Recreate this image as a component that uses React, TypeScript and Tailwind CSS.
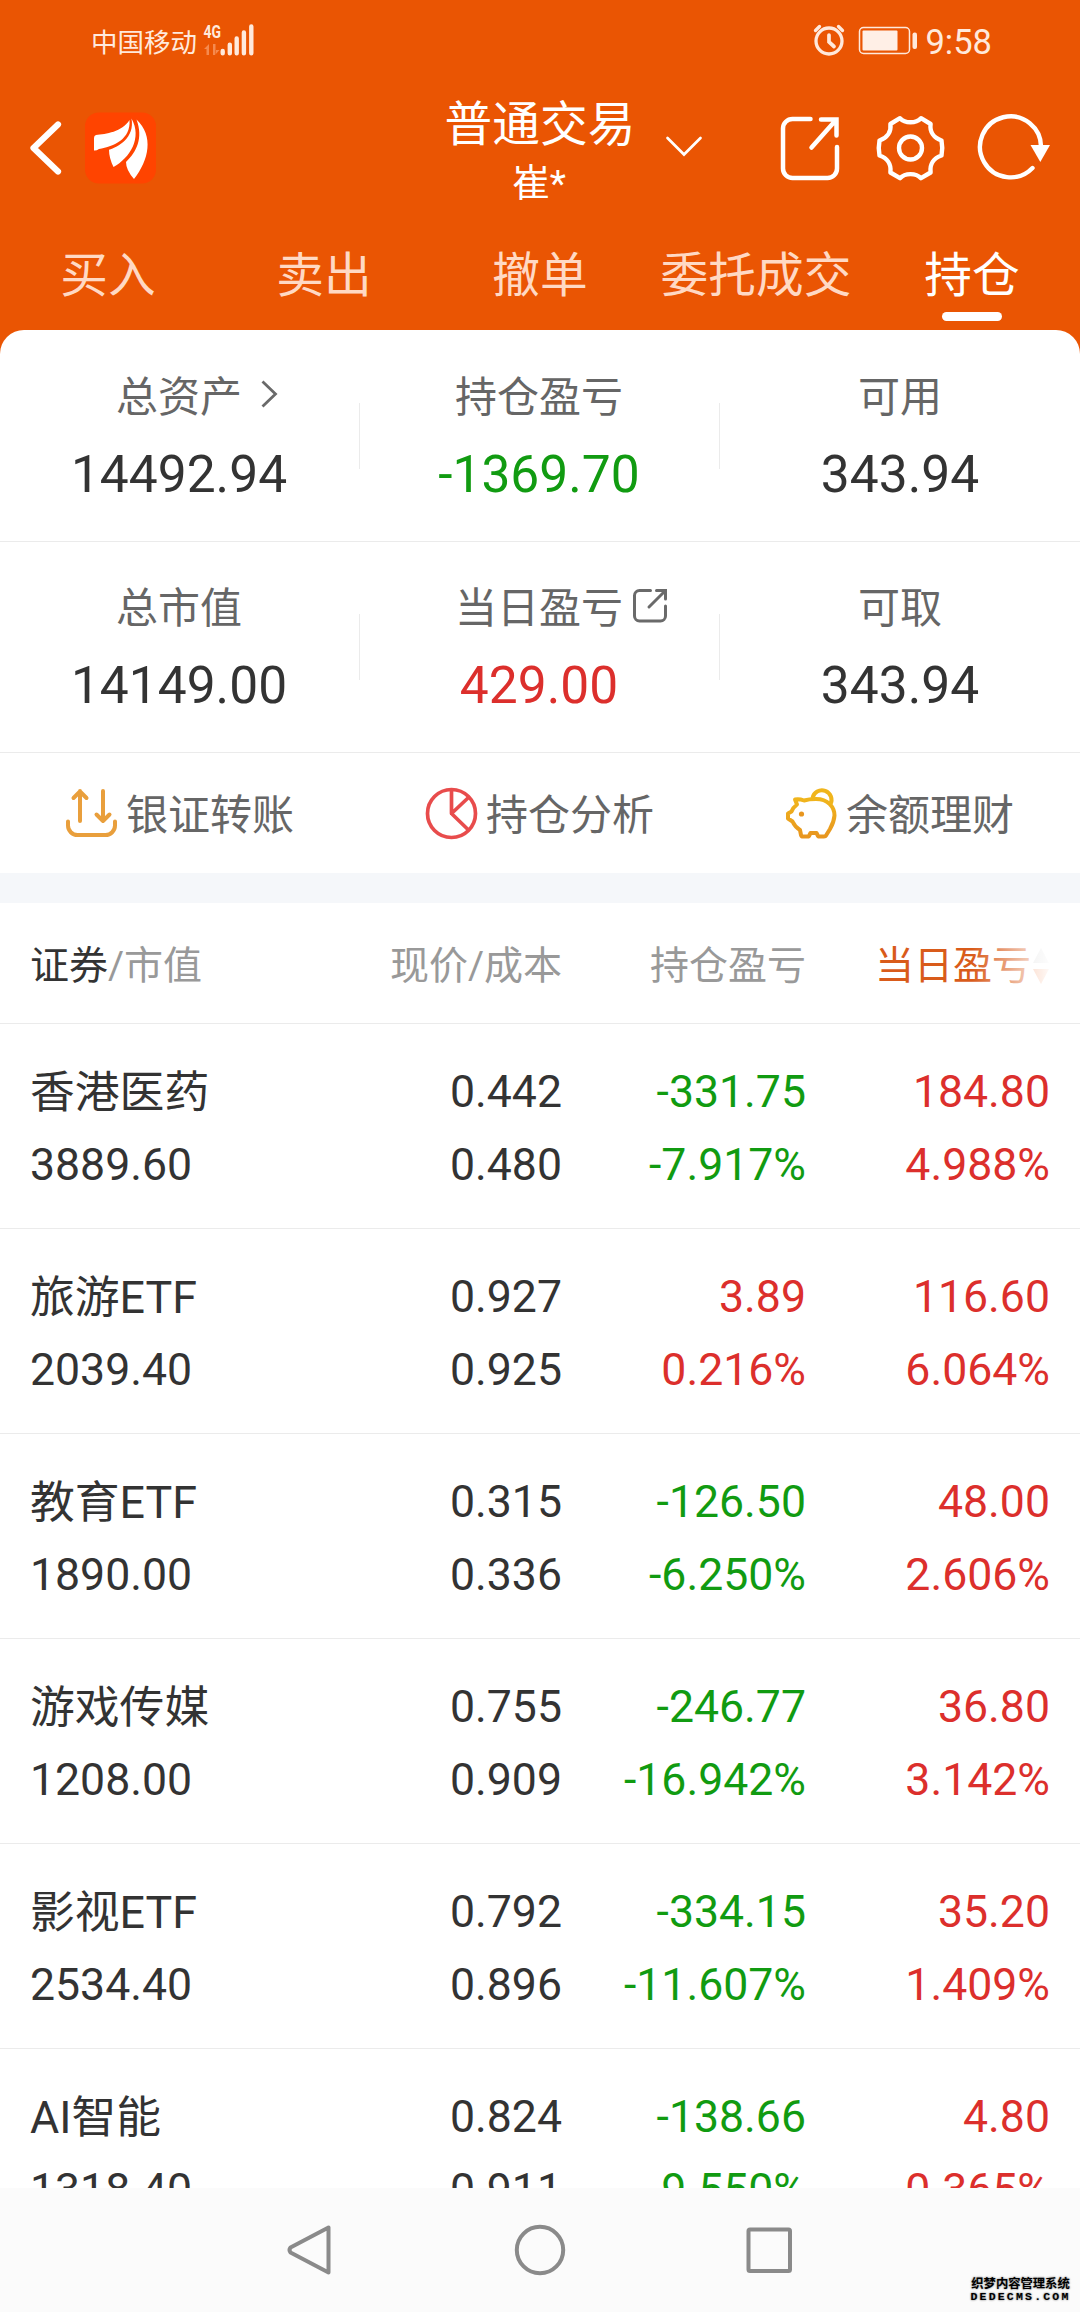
import React from "react";

const GREEN = "text-[#119b11]";
const RED = "text-[#dc2f2c]";

function StatusBar() {
  return (
    <div className="flex h-[84px] items-start justify-between pr-[88px] pl-[91px] text-[#ffe9dc]">
      <div className="flex pt-[22px]">
        <span className="mt-[2px] text-[26.5px] leading-[38px] whitespace-nowrap">中国移动</span>
        <svg className="ml-[6px] h-[36px] w-[54px] overflow-visible" viewBox="203 22 54 36">
          <text x="203.5" y="38" fontSize="19" fontWeight="700" textLength="17.5" lengthAdjust="spacingAndGlyphs" fill="#ffe9dc" fontFamily="Roboto">4G</text>
          <path d="M204 49l5-5v11h-2.500v-6zM213 44h2.500v11h-2.500zM215 55l4.500-5h-4.500z" fill="#f58a4f" />
          <path d="M222.700 51v2.300M229.800 44.800v8.500M236.700 38.500v14.800M243.900 32.500v20.800M251.300 26.500v26.800" stroke="#ffe9dc" strokeWidth="4.400" strokeLinecap="round" />
        </svg>
      </div>
      <div className="flex pt-[22px]">
        <svg className="h-[36px] w-[108px]" viewBox="812 22 108 36" fill="none" stroke="#ffe9dc">
          <circle cx="829" cy="41" r="13" strokeWidth="3.300" />
          <path d="M829 35v7l5 4.500" strokeWidth="3.700" strokeLinecap="round" />
          <path d="M815.500 30.500l4-4M842.500 30.500l-4-4" strokeWidth="3.300" strokeLinecap="round" />
          <rect x="859.500" y="27.500" width="50" height="26" rx="4" strokeWidth="1.500" />
          <rect x="862.500" y="30.500" width="35" height="20" rx="1" fill="#ffefe6" stroke="none" />
          <rect x="912.500" y="32.500" width="4.500" height="16.500" rx="2" fill="#ffe9dc" stroke="none" />
        </svg>
        <span className="mt-px ml-[5px] text-[34.5px] leading-[38px]">9:58</span>
      </div>
    </div>
  );
}

function TitleBar() {
  return (
    <div className="grid h-[132px] grid-cols-[360px_360px_360px] text-white">
      <div className="flex items-start pt-[28px] pl-[28px]">
        <svg className="h-[72px] w-[36px]" viewBox="28 112 36 72" fill="none">
          <path d="M58 124.500L33.500 148l24.500 23.500" stroke="#fff" strokeWidth="6.200" strokeLinecap="round" strokeLinejoin="round" />
        </svg>
        <svg className="ml-[21px] h-[72px] w-[72px]" viewBox="85 112 72 72">
          <rect x="85" y="112.500" width="71" height="71" rx="14" fill="#ff4400" />
          <path d="M129.500 120C122 132 106 134 96 135Q94 135.500 94 138V150.500Q96 151 99 149C114 146.500 131 139 129.500 120z" fill="#fff" />
          <path d="M131.500 118.500C135 138 118 147 109 149.800Q109 158 113.500 167C130 158 142.500 138 131.500 118.500z" fill="#fff" />
          <path d="M136.500 119.500C143.500 138 136.500 152 126 162Q126 170 134 179C149 160 154 136 136.500 119.500z" fill="#fff" />
        </svg>
      </div>
      <div className="flex flex-col items-center">
        <div className="mt-[7px] text-[47.7px] leading-[68px] whitespace-nowrap">普通交易</div>
        <div className="relative -left-px -mt-[2px] text-[37.5px] leading-[52px]">崔*</div>
      </div>
      <div className="flex items-start pt-[28px]">
        <svg className="-ml-[56px] h-[72px] w-[390px] shrink-0" viewBox="664 112 390 72" fill="none" stroke="#fff" strokeLinecap="round">
          <path d="M667.500 138L684 154.500L700.500 138" strokeWidth="2.700" />
          <path d="M810.500 119h-18a9.500 9.500 0 0 0-9.500 9.500v40a9.500 9.500 0 0 0 9.500 9.500h35a9.500 9.500 0 0 0 9.500-9.500v-21.500M821 119.500h15.500v16M835.500 120.500l-24 27" strokeWidth="4.500" />
          <path d="M900 118.200C905 123.600 916 123.600 921 118.200L930.600 124C929.500 132 934 138 941.500 140.500Q943 148 941.500 155.500C934 158 929.500 164 930.600 172.500L921 178.200C916 172.800 905 172.800 900 178.200L890.400 172.500C891.500 164 887 158 879.500 155.500Q878 148 879.500 140.500C887 138 891.500 132 890.400 124z" strokeWidth="4.400" strokeLinejoin="round" />
          <circle cx="910.500" cy="148" r="11.500" strokeWidth="4.400" />
          <path d="M1041 148A30.500 30.500 0 1 0 1032.500 168" strokeWidth="4.400" />
          <path d="M1030.500 145h19.500l-9.700 17z" fill="#fff" stroke="none" />
        </svg>
      </div>
    </div>
  );
}

function Tabs() {
  const tabs = ["买入", "卖出", "撤单", "委托成交", "持仓"];
  return (
    <div className="grid h-[129px] grid-cols-5 text-[47.7px] leading-[68px] text-[#ffd9c4]">
      {tabs.map((t) => (
        <div key={t} className="flex flex-col items-center pt-[26px] whitespace-nowrap">
          {t === "持仓" ? (
            <>
              <span className="text-white">{t}</span>
              <span className="mt-[2px] h-[9px] w-[60px] rounded-full bg-white" />
            </>
          ) : (
            <span>{t}</span>
          )}
        </div>
      ))}
    </div>
  );
}

function Share() {
  return (
    <svg className="absolute top-[1px] left-full ml-[8px] h-[38px] w-[38px]" viewBox="631 586 38 38" fill="none" stroke="#6a6a6a" strokeWidth="3" strokeLinecap="round">
      <path d="M650.500 589.500H639.500a5 5 0 0 0-5 5v20.500a5 5 0 0 0 5 5H660.500a5 5 0 0 0 5-5v-10M656.500 589.500h9v8.500M665 590l-16 16" />
    </svg>
  );
}

type Cell = { label: string; value: string; color?: string; mark?: React.ReactNode };

function SummaryRow({ cells }: { cells: Cell[] }) {
  return (
    <div className="grid h-[211px] grid-cols-3 border-b border-[#ebebeb]">
      {cells.map((c, i) => (
        <div key={c.label} className={"relative flex flex-col items-center pt-[44px] " + (i < 2 ? "pr-[2px]" : "")}>
          <div className="relative text-[42px] leading-[46px] text-[#666666]">
            {c.label}
            {c.mark}
          </div>
          <div className={"mt-[24px] text-[51.5px] leading-[60px] " + (c.color ?? "text-[#333333]")}>{c.value}</div>
          {i < 2 && <span className="absolute top-[72px] right-0 h-[66px] w-px bg-[#ebebeb]" />}
        </div>
      ))}
    </div>
  );
}

const actions = [
  {
    label: "银证转账",
    icon: (
      <svg className="h-[54px] w-[54px]" viewBox="65 785 54 54" fill="none" stroke="#e99f3c" strokeWidth="4" strokeLinecap="round" strokeLinejoin="round">
        <path d="M68 820.500v4a9.500 9.500 0 0 0 9.500 9.500h28a9.500 9.500 0 0 0 9.500-9.500v-4M80 820v-30M73.500 797l6.500-6.500l6.500 6.500M103 790v30M96.500 813.500l6.500 6.500l6.500-6.500" />
      </svg>
    ),
  },
  {
    label: "持仓分析",
    icon: (
      <svg className="h-[54px] w-[54px]" viewBox="425 785 54 54" fill="none" stroke="#e84c4c" strokeWidth="3.700" strokeLinejoin="round">
        <circle cx="451.500" cy="812.500" r="24" />
        <path d="M451.500 788.500V812.500L468.500 796.500M451.500 812.500L468.500 829" />
      </svg>
    ),
  },
  {
    label: "余额理财",
    icon: (
      <svg className="h-[54px] w-[54px]" viewBox="785 785 54 54" fill="none" strokeWidth="4" strokeLinejoin="round">
        <defs>
          <linearGradient id="pig" x1="0" y1="0" x2="0" y2="1">
            <stop offset="0" stopColor="#f0b51c" />
            <stop offset="1" stopColor="#e8961f" />
          </linearGradient>
        </defs>
        <path d="M795 798.500Q799 797.500 804 799.500Q809 798 816 798C828 798 834.500 806 834.500 814.500Q834 821 830 828L826 834.500Q825.500 835.500 824 835.500H819.500Q818 835.500 817.500 834L816.500 832H810.500L809.500 834Q809 835.500 807.500 835.500H803Q801.500 835.500 801 834L800 829Q795 826 792.500 820.500L788 817.500V812.500L791.500 810.500Q793 806.500 797 803.500z" stroke="url(#pig)" />
        <path d="M812.500 797a9.600 9.600 0 1 1 17.800 6.500" stroke="#f0b51c" />
        <circle cx="801.500" cy="813" r="2.600" fill="#e8961f" />
      </svg>
    ),
  },
];

function Actions() {
  return (
    <div className="grid h-[120px] grid-cols-3">
      {actions.map((a) => (
        <div key={a.label} className="flex items-center justify-center gap-[7px] pr-px text-[42px] leading-[60px] whitespace-nowrap text-[#666666]">
          {a.icon}
          <span className="mt-[5px]">{a.label}</span>
        </div>
      ))}
    </div>
  );
}

function TableHeader() {
  return (
    <div className="grid h-[121px] grid-cols-[318px_214px_244px_244px] items-center border-b border-[#ebebeb] px-[30px] pt-[7px] text-[39px] whitespace-nowrap text-[#999999]">
      <div>
        <span className="text-[#333333]">证券</span>/市值
      </div>
      <div className="text-right">现价/成本</div>
      <div className="text-right">持仓盈亏</div>
      <div className="relative flex items-center justify-end text-[#d95b1a]">
        <span>当日盈亏</span>
        <svg className="-mt-px ml-px h-[36px] w-[18px]" viewBox="0 0 18 36">
          <path d="M9 0l8 15H1z" fill="#d8d8d8" />
          <path d="M9 36l8-15H1z" fill="#f49a6c" />
        </svg>
        <span className="absolute inset-y-0 right-0 w-[78px] bg-linear-to-r from-white/0 to-white/95" />
      </div>
    </div>
  );
}

const rows = [
  ["香港医药", "3889.60", "0.442", "0.480", "-331.75", "-7.917%", "184.80", "4.988%"],
  ["旅游ETF", "2039.40", "0.927", "0.925", "3.89", "0.216%", "116.60", "6.064%"],
  ["教育ETF", "1890.00", "0.315", "0.336", "-126.50", "-6.250%", "48.00", "2.606%"],
  ["游戏传媒", "1208.00", "0.755", "0.909", "-246.77", "-16.942%", "36.80", "3.142%"],
  ["影视ETF", "2534.40", "0.792", "0.896", "-334.15", "-11.607%", "35.20", "1.409%"],
  ["AI智能", "1318.40", "0.824", "0.911", "-138.66", "9.550%", "4.80", "0.365%"],
];

function Pair({ a, b, color }: { a: string; b: string; color: string }) {
  return (
    <div className={"flex flex-col text-[44.6px] " + color}>
      <span className="h-[73px] leading-[73px]">{a}</span>
      <span className="h-[73px] leading-[73px]">{b}</span>
    </div>
  );
}

function Holdings() {
  return (
    <div className="h-[1164px] overflow-hidden">
      {rows.map((r) => (
        <div key={r[0]} className="grid h-[205px] grid-cols-[318px_214px_244px_244px] border-b border-[#ebebeb] px-[30px] pt-[32px] text-right">
          <div className="flex flex-col text-left text-[#333333]">
            <span className="h-[73px] text-[44.8px] leading-[73px]">{r[0]}</span>
            <span className="h-[73px] text-[44.6px] leading-[73px]">{r[1]}</span>
          </div>
          <Pair a={r[2]} b={r[3]} color="text-[#333333]" />
          <Pair a={r[4]} b={r[5]} color={r[4].startsWith("-") ? GREEN : RED} />
          <Pair a={r[6]} b={r[7]} color={RED} />
        </div>
      ))}
    </div>
  );
}

function NavBar() {
  return (
    <div className="relative grid h-[124px] grid-cols-[310px_460px_310px] bg-[#fbfbfb]">
      <svg className="col-start-2 mt-[32px] ml-[-30px] h-[60px] w-[520px]" viewBox="280 2220 520 60" fill="none" stroke="#8a8a8a" strokeWidth="4" strokeLinejoin="round">
        <path d="M328.500 2227.500v45L290.500 2252.500Q288.500 2250 290.500 2247.500z" />
        <circle cx="540" cy="2250" r="23.200" />
        <rect x="748.500" y="2229.500" width="41.500" height="41.500" rx="1.500" />
      </svg>
      <div className="absolute top-[89px] right-[9px] w-[101px] text-center text-black [text-shadow:0_0_2px_#999,0_0_2px_#aaa]">
        <div className="text-[12.300px] leading-[14px] font-bold whitespace-nowrap">织梦内容管理系统</div>
        <div className="font-['Liberation_Mono'] text-[11.5px] leading-[12px] font-bold tracking-[2.200px] whitespace-nowrap">DEDECMS.COM</div>
      </div>
    </div>
  );
}

export default function App() {
  return (
    <div className="h-[2312px] w-[1080px] overflow-hidden bg-[#ea5503] font-[Roboto,'Noto_Sans_CJK_SC',sans-serif]">
      <StatusBar />
      <TitleBar />
      <Tabs />
      <div className="-mt-[15px] overflow-hidden rounded-t-[24px] bg-white pt-px">
        <SummaryRow
          cells={[
            {
              label: "总资产",
              value: "14492.94",
              mark: (
                <svg className="absolute top-[4px] left-full ml-[17px] h-[30px] w-[20px]" viewBox="259 379 20 30" fill="none" stroke="#6a6a6a" strokeWidth="2.800">
                  <path d="M262.500 381.500L275.500 394L262.500 406.500" />
                </svg>
              ),
            },
            { label: "持仓盈亏", value: "-1369.70", color: GREEN },
            { label: "可用", value: "343.94" },
          ]}
        />
        <SummaryRow
          cells={[
            { label: "总市值", value: "14149.00" },
            { label: "当日盈亏", value: "429.00", color: RED, mark: <Share /> },
            { label: "可取", value: "343.94" },
          ]}
        />
        <Actions />
        <div className="h-[30px] bg-[#f5f7fa]" />
        <TableHeader />
        <Holdings />
      </div>
      <NavBar />
    </div>
  );
}
